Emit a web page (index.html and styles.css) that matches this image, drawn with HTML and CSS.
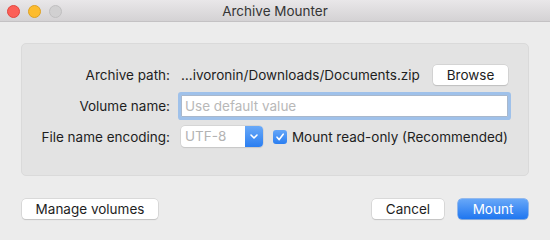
FILE: index.html
```html
<!DOCTYPE html>
<html lang="en">

<head>
    <meta charset="UTF-8">
    <meta name="viewport" content="width=device-width, initial-scale=1.0">
    <title>Archive Mounter</title>
    <link rel="stylesheet" href="styles.css">
</head>

<body>
    <div class="window">
        <div class="titlebar">
            <div class="lights">
                <span class="light red"></span>
                <span class="light yellow"></span>
                <span class="light gray"></span>
            </div>
            <div class="title">Archive Mounter</div>
            <div></div>
        </div>

        <div class="group">
            <div class="form">
                <div class="label">Archive path:</div>
                <div class="field row-path">
                    <span class="path">…ivoronin/Downloads/Documents.zip</span>
                    <button class="btn btn-browse">Browse</button>
                </div>

                <div class="label">Volume name:</div>
                <div class="field">
                    <input type="text" class="text-input" placeholder="Use default value">
                </div>

                <div class="label">File name encoding:</div>
                <div class="field row-enc">
                    <div class="select">
                        <span class="select-value">UTF-8</span>
                        <span class="select-arrow">
                            <svg width="10" height="7" viewBox="0 0 10 7">
                                <path d="M2 2 L5 5 L8 2" fill="none" stroke="#fff" stroke-width="1.6" stroke-linecap="round" stroke-linejoin="round"/>
                            </svg>
                        </span>
                    </div>
                    <span class="check">
                        <svg width="10" height="10" viewBox="0 0 10 10">
                            <path d="M2 5.2 L4.2 7.6 L8.2 2.2" fill="none" stroke="#fff" stroke-width="1.6" stroke-linecap="round" stroke-linejoin="round"/>
                        </svg>
                    </span>
                    <span class="check-label">Mount read-only (Recommended)</span>
                </div>
            </div>
        </div>

        <div class="actions">
            <button class="btn btn-manage">Manage volumes</button>
            <div class="actions-right">
                <button class="btn btn-cancel">Cancel</button>
                <button class="btn btn-mount">Mount</button>
            </div>
        </div>
    </div>
</body>

</html>
```

FILE: styles.css
```css
* {
    box-sizing: border-box;
}

body {
    margin: 0;
    background: #ececec;
    font-family: Inter, "Liberation Sans", sans-serif;
    font-size: 13.5px;
    color: #1e1e1e;
}

.window {
    width: 550px;
    height: 240px;
    overflow: hidden;
}

/* title bar */
.titlebar {
    height: 22px;
    display: grid;
    grid-template-columns: 1fr auto 1fr;
    align-items: center;
    background: linear-gradient(#e9e7e9, #d4d2d4);
    border-bottom: 1px solid #c4c2c4;
}

.lights {
    display: flex;
    gap: 8px;
    padding-left: 7px;
    padding-top: 1px;
}

.light {
    width: 13px;
    height: 13px;
    border-radius: 50%;
}

.red {
    background: #fc5f57;
    border: 0.5px solid #e2463f;
}

.yellow {
    background: #fdbc2e;
    border: 0.5px solid #dea123;
}

.gray {
    background: #d1d0d1;
    border: 0.5px solid #c0bfc0;
}

.title {
    color: #353535;
    font-size: 13.5px;
}

/* group box */
.group {
    margin: 21px 21px 0;
    height: 133px;
    background: #e3e3e3;
    border: 1px solid #dadada;
    border-radius: 5px;
    padding-top: 21px;
}

.form {
    display: grid;
    grid-template-columns: 148px 327px;
    column-gap: 11px;
    row-gap: 10px;
    align-items: center;
}

.label {
    text-align: right;
    white-space: nowrap;
}

.field {
    display: flex;
    align-items: center;
}

.row-path {
    justify-content: space-between;
}

.path {
    white-space: nowrap;
}

.text-input {
    width: 100%;
    height: 22px;
    border: 1px solid #a9b8cc;
    background: #fff;
    font-family: inherit;
    font-size: 13.5px;
    padding: 0 3px;
    box-shadow: 0 0 0 3px #9fc1ea;
    border-radius: 1px;
    outline: none;
}

.text-input::placeholder {
    color: #b8b8b8;
}

.row-enc {
    margin-top: -1px;
}

.select {
    width: 82px;
    height: 21px;
    display: flex;
    background: #fff;
    border-radius: 4px;
    box-shadow: 0 0 0 0.5px #c8c8c8, 0 1px 1px rgba(0, 0, 0, 0.12);
}

.select-value {
    flex: 1;
    color: #b3b3b3;
    padding-left: 4px;
    line-height: 21px;
}

.select-arrow {
    width: 18px;
    border-radius: 0 4px 4px 0;
    background: linear-gradient(#69a9f8, #2a7ef1);
    display: flex;
    align-items: center;
    justify-content: center;
}

.check {
    width: 14px;
    height: 14px;
    margin-left: 10px;
    border-radius: 3px;
    background: linear-gradient(#65a6f8, #2a7ef1);
    display: flex;
    align-items: center;
    justify-content: center;
}

.check-label {
    margin-left: 5px;
    white-space: nowrap;
}

/* buttons */
.btn {
    font-family: inherit;
    font-size: 13.5px;
    color: #1e1e1e;
    background: #fff;
    border: none;
    border-radius: 4px;
    height: 20px;
    padding: 0;
    box-shadow: 0 0 0 0.5px #c6c6c6, 0 1px 1px rgba(0, 0, 0, 0.18);
}

.btn-browse {
    width: 75px;
}

.actions {
    display: flex;
    justify-content: space-between;
    margin: 23px 22px 0;
}

.actions-right {
    display: flex;
    gap: 14px;
}

.btn-manage {
    width: 136px;
}

.btn-cancel {
    width: 72px;
}

.btn-mount {
    width: 70px;
    color: #fff;
    background: linear-gradient(#67a7f8, #1f76f0);
    box-shadow: 0 0 0 0.5px #3b86ee, 0 1px 1px rgba(0, 0, 0, 0.15);
}
```
